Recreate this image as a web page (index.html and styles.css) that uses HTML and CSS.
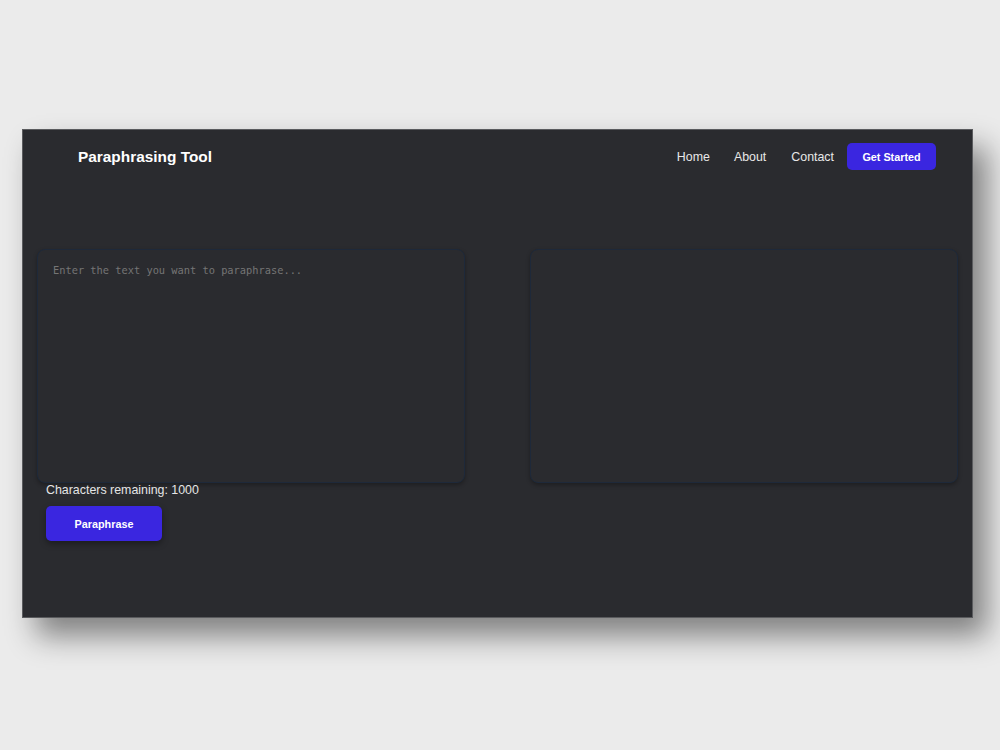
FILE: index.html
```html
<!DOCTYPE html>
<html lang="en">
<head>
<meta charset="utf-8">
<title>Paraphrasing Tool</title>
<link rel="stylesheet" href="styles.css">
</head>
<body>
<div class="window">
  <header class="header">
    <div class="brand">Paraphrasing Tool</div>
    <nav class="nav">
      <a class="nav-link" href="#">Home</a>
      <a class="nav-link" href="#">About</a>
      <a class="nav-link" href="#">Contact</a>
      <a class="cta" href="#">Get Started</a>
    </nav>
  </header>
  <main class="main">
    <div class="panes">
      <textarea class="pane" placeholder="Enter the text you want to paraphrase..."></textarea>
      <textarea class="pane" readonly></textarea>
    </div>
    <div class="controls">
      <div class="count">Characters remaining: 1000</div>
      <button class="btn">Paraphrase</button>
    </div>
  </main>
</div>
</body>
</html>
```

FILE: styles.css
```css
html, body {
  margin: 0;
  padding: 0;
  background: #ebebeb;
  font-family: "Liberation Sans", Arial, sans-serif;
}
body {
  min-height: 750px;
  padding-top: 129px;
  box-sizing: border-box;
}
.window {
  box-sizing: border-box;
  margin: 0 0 0 22px;
  width: 951px;
  height: 489px;
  background: #2a2b2f;
  border: 1px solid #5a5b5e;
  box-shadow: 14px 18px 28px rgba(0, 0, 0, 0.45);
  display: flex;
  flex-direction: column;
}
.header {
  display: flex;
  align-items: center;
  justify-content: space-between;
  padding: 13px 36px 12px 55px;
}
.brand {
  color: #ffffff;
  font-weight: bold;
  font-size: 15.4px;
}
.nav {
  display: flex;
  align-items: center;
}
.nav-link {
  color: #e8e8e8;
  text-decoration: none;
  font-size: 12.4px;
  margin-right: 24px;
}
.nav-link:nth-child(2) {
  margin-right: 25px;
}
.nav-link:nth-child(3) {
  margin-right: 13px;
}
.cta {
  display: flex;
  align-items: center;
  justify-content: center;
  width: 89px;
  height: 27px;
  background: #3a26e0;
  color: #ffffff;
  border-radius: 5px;
  text-decoration: none;
  font-weight: bold;
  font-size: 10.8px;
}
.main {
  padding: 67px 14px 0 14px;
}
.panes {
  display: flex;
  justify-content: space-between;
}
.pane {
  box-sizing: border-box;
  width: 428px;
  height: 234px;
  margin: 0;
  padding: 14px 15px;
  background: #2a2b2f;
  border: 1px solid #1e293a;
  border-radius: 8px;
  box-shadow: 0 2px 4px rgba(0, 0, 0, 0.3);
  resize: none;
  font-family: "DejaVu Sans Mono", monospace;
  font-size: 10.35px;
  color: #dddddd;
  outline: none;
}
.pane::placeholder {
  color: #757575;
}
.controls {
  padding-left: 9px;
}
.count {
  color: #e5e5e5;
  font-size: 12.4px;
  margin-top: 0;
  line-height: 14px;
}
.btn {
  margin-top: 9px;
  width: 116px;
  height: 35px;
  background: #3a26e0;
  color: #ffffff;
  border: none;
  border-radius: 5px;
  font-family: "Liberation Sans", Arial, sans-serif;
  font-weight: bold;
  font-size: 10.8px;
  box-shadow: 0 3px 6px rgba(0, 0, 0, 0.35);
}
```
